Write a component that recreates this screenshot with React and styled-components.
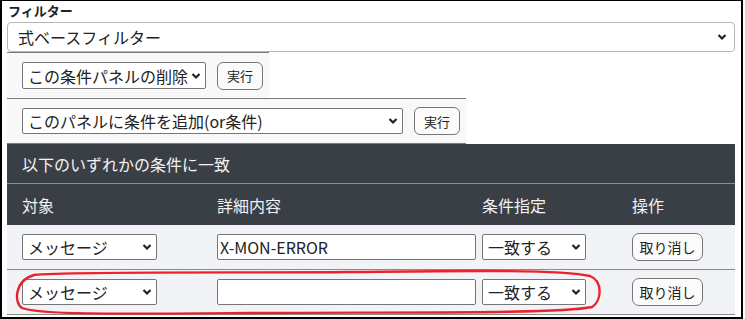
import React from "react";
import styled, { createGlobalStyle } from "styled-components";

const GlobalStyle = createGlobalStyle`
  body {
    margin: 0;
    background: #ffffff;
    font-family: "Noto Sans CJK JP", "Noto Sans", sans-serif;
    color: #212529;
  }
  * {
    box-sizing: border-box;
  }
`;

const Chevron = () => (
  <svg width="10" height="7" viewBox="0 0 10 7">
    <path d="M1.5 1.5 L5 5 L8.5 1.5" fill="none" stroke="#222" strokeWidth="2.2" />
  </svg>
);

function Select({ value, width, height, radius, border, fontSize, arrowRight, padLeft }) {
  return (
    <SelectWrap $width={width} $height={height}>
      <NativeSelect
        defaultValue={value}
        $radius={radius}
        $border={border}
        $fontSize={fontSize}
        $padLeft={padLeft}
      >
        <option>{value}</option>
      </NativeSelect>
      <Arrow $right={arrowRight}>
        <Chevron />
      </Arrow>
    </SelectWrap>
  );
}

function App() {
  return (
    <>
      <GlobalStyle />
      <Frame>
        <Label>フィルター</Label>
        <Select
          value="式ベースフィルター"
          width={728}
          height={30}
          radius={4}
          border="#b5b5b5"
          fontSize={16}
          arrowRight={8}
          padLeft={10}
        />
        <ActionRow>
          <Select value="この条件パネルの削除" width={184} height={27} />
          <SmallButton>実行</SmallButton>
        </ActionRow>
        <ActionRow $last>
          <Select value="このパネルに条件を追加(or条件)" width={381} height={26} />
          <SmallButton>実行</SmallButton>
        </ActionRow>
        <Table>
          <TitleRow>以下のいずれかの条件に一致</TitleRow>
          <HeadRow>
            <span>対象</span>
            <span>詳細内容</span>
            <span>条件指定</span>
            <span>操作</span>
          </HeadRow>
          <DataRow>
            <Select value="メッセージ" width={135} height={26} />
            <TextInput defaultValue="X-MON-ERROR" />
            <Select value="一致する" width={104} height={26} />
            <CancelButton>取り消し</CancelButton>
          </DataRow>
          <DataRow>
            <Select value="メッセージ" width={135} height={26} />
            <TextInput defaultValue="" />
            <Select value="一致する" width={104} height={26} />
            <CancelButton>取り消し</CancelButton>
          </DataRow>
        </Table>
        <Annotation width="745" height="319" viewBox="0 0 745 319">
          <path
            d="M34 275 C70 271 250 273 350 272 C450 271 560 269 590 276 C603 281 602 301 592 307 C560 314 400 312 250 313 C120 314 40 315 22 308 C14 303 14 281 34 275 Z"
            fill="none"
            stroke="#e8232b"
            strokeWidth="2.4"
          />
        </Annotation>
      </Frame>
    </>
  );
}

export default App;

const Frame = styled.div`
  position: relative;
  width: 743px;
  height: 319px;
  border: 2px solid #000;
  border-top-width: 1px;
  padding: 0 4px 0 5px;
  overflow: hidden;
`;

const Label = styled.div`
  height: 21px;
  padding: 1px 0 0 1px;
  font-size: 13px;
  line-height: 17px;
  font-weight: 700;
  color: #222;
`;

const SelectWrap = styled.div`
  position: relative;
  width: ${(p) => p.$width}px;
  height: ${(p) => p.$height}px;
  flex: none;
`;

const NativeSelect = styled.select`
  appearance: none;
  width: 100%;
  height: 100%;
  margin: 0;
  padding: 0 14px 0 ${(p) => p.$padLeft || 5}px;
  background: #fff;
  border: 1px solid ${(p) => p.$border || "#767676"};
  border-radius: ${(p) => p.$radius || 2}px;
  font-family: "Noto Sans CJK JP", sans-serif;
  font-size: ${(p) => p.$fontSize || 16}px;
  color: #222;
  outline: none;
`;

const Arrow = styled.span`
  position: absolute;
  right: ${(p) => p.$right || 5}px;
  top: 50%;
  transform: translateY(-50%);
  display: flex;
  pointer-events: none;
`;

const ActionRow = styled.div`
  display: flex;
  align-items: center;
  gap: 11px;
  width: fit-content;
  height: 46px;
  padding: 0 6px 0 15px;
  background: #f8f8f8;
  border-top: 1px solid #7a7a7a;
  border-bottom: ${(p) => (p.$last ? "1px solid #7a7a7a" : "none")};
`;

const SmallButton = styled.button`
  width: 46px;
  height: 28px;
  padding: 0;
  background: #fbfbfb;
  border: 1px solid #767676;
  border-radius: 6px;
  font-family: "Noto Sans CJK JP", sans-serif;
  font-size: 13px;
  color: #222;
`;

const Table = styled.div`
  width: 728px;
  background: #f2f3f7;
`;

const TitleRow = styled.div`
  height: 40px;
  display: flex;
  align-items: center;
  padding-left: 15px;
  background: #3a3f46;
  border-bottom: 1px solid #8a8d92;
  color: #f2f2f2;
  font-size: 16px;
`;

const HeadRow = styled.div`
  height: 41px;
  display: grid;
  grid-template-columns: 195px 265px 150px 1fr;
  align-items: center;
  padding-left: 15px;
  background: #3a3f46;
  color: #f2f2f2;
  font-size: 16px;
`;

const DataRow = styled.div`
  height: 45px;
  display: grid;
  grid-template-columns: 195px 265px 150px 1fr;
  align-items: center;
  padding-left: 15px;
  border-bottom: 1px solid #8a8a8a;
`;

const TextInput = styled.input`
  width: 259px;
  height: 26px;
  margin: 0;
  padding: 0 2px;
  background: #fff;
  border: 1px solid #767676;
  border-radius: 2px;
  font-family: "Noto Sans CJK JP", sans-serif;
  font-size: 16px;
  color: #222;
  outline: none;
`;

const CancelButton = styled.button`
  width: 71px;
  height: 28px;
  padding: 0;
  background: #fbfbfb;
  border: 1px solid #767676;
  border-radius: 7px;
  font-family: "Noto Sans CJK JP", sans-serif;
  font-size: 14px;
  color: #222;
`;

const Annotation = styled.svg`
  position: absolute;
  left: -2px;
  top: -1px;
  pointer-events: none;
`;
